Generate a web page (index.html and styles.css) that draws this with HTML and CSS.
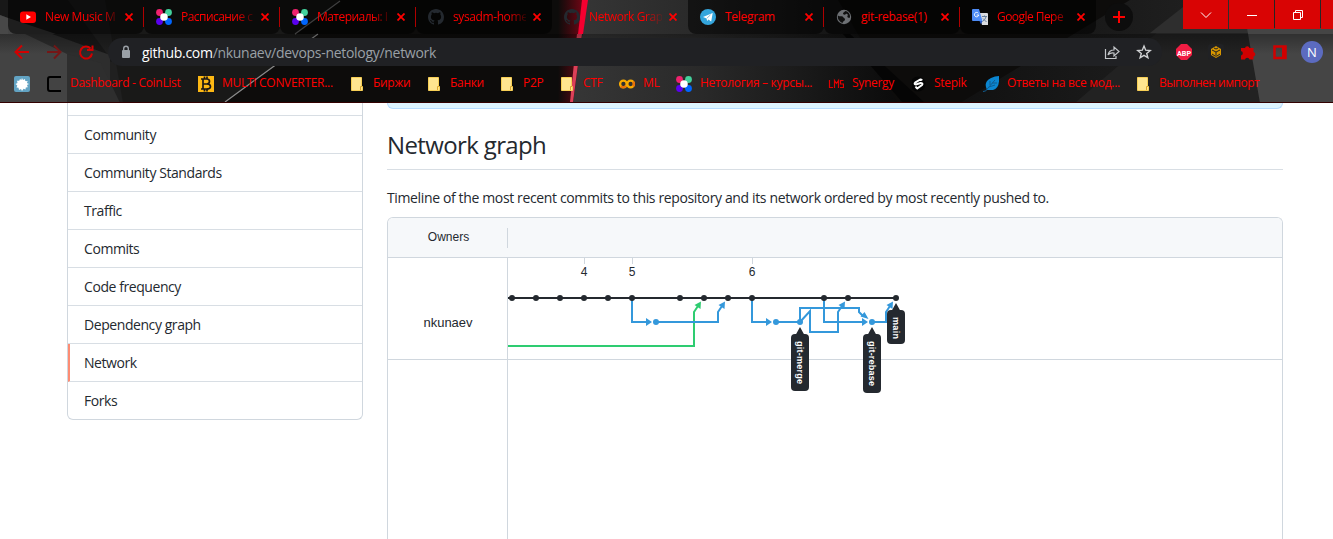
FILE: index.html
```html
<!DOCTYPE html>
<html lang="en">
<head>
<meta charset="utf-8">
<title>Network Graph</title>
<link rel="stylesheet" href="styles.css">
</head>
<body>
<svg class="defs" width="0" height="0">
  <symbol id="netology" viewBox="0 0 16 16"><circle cx="3.5" cy="3.5" r="3.4" fill="#f0226e"/><circle cx="12.5" cy="3.5" r="3.4" fill="#43d19c"/><circle cx="3.5" cy="12.5" r="3.4" fill="#5a00f0"/><circle cx="12.5" cy="12.5" r="3.4" fill="#0066ff"/><circle cx="8" cy="8" r="3.8" fill="#fff"/></symbol>
  <symbol id="github" viewBox="0 0 16 16"><path fill="#24292f" d="M8 0C3.58 0 0 3.58 0 8c0 3.54 2.29 6.53 5.47 7.59.4.07.55-.17.55-.38 0-.19-.01-.82-.01-1.49-2.01.37-2.53-.49-2.69-.94-.09-.23-.48-.94-.82-1.13-.28-.15-.68-.52-.01-.53.63-.01 1.08.58 1.23.82.72 1.21 1.87.87 2.33.66.07-.52.28-.87.51-1.07-1.78-.2-3.64-.89-3.64-3.95 0-.87.31-1.59.82-2.15-.08-.2-.36-1.02.08-2.12 0 0 .67-.21 2.2.82a7.6 7.6 0 0 1 4 0c1.53-1.04 2.2-.82 2.2-.82.44 1.1.16 1.92.08 2.12.51.56.82 1.27.82 2.15 0 3.07-1.87 3.75-3.65 3.95.29.25.54.73.54 1.48 0 1.07-.01 1.93-.01 2.2 0 .21.15.46.55.38A8.01 8.01 0 0 0 16 8c0-4.42-3.58-8-8-8z"/></symbol>
  <symbol id="close" viewBox="0 0 8 8"><path d="M.5.5l7 7M7.500.5l-7 7" stroke="#f00" stroke-width="1.800" fill="none"/></symbol>
  <symbol id="folder" viewBox="0 0 16 16"><path d="M.5 1.500h10v9h1v4H.5z" fill="#ffe58f" stroke="#f7cf55"/><path d="M9.500 14v-3.500H11" stroke="#dca72c" fill="none"/></symbol>
</svg>

<header class="browser">
  <svg class="theme" viewBox="0 0 1333 103" width="1333" height="103">
    <defs>
      <linearGradient id="glow"><stop offset="0" stop-color="#c00018" stop-opacity="0"/><stop offset="1" stop-color="#d60020" stop-opacity=".5"/></linearGradient>
      <linearGradient id="fade"><stop offset="0" stop-color="#363636"/><stop offset=".4" stop-color="#292929"/><stop offset="1" stop-color="#0b0b0b"/></linearGradient>
      <linearGradient id="right"><stop offset="0" stop-color="#111"/><stop offset="1" stop-color="#282828"/></linearGradient>
      <linearGradient id="down" x1="0" y1="0" x2="0" y2="1"><stop offset="0" stop-color="#000" stop-opacity=".3"/><stop offset="1" stop-color="#000" stop-opacity="0"/></linearGradient>
    </defs>
    <rect width="1333" height="103" fill="#0d0c0b"/>
    <path d="M0 0h340l-45 34h23L225 103H0z" fill="#191918"/>
    <path d="M0 0h105l18 103H0z" fill="#202020"/>
    <path d="M8 0h60l45 62L67 53 0 32V0z" fill="#181818"/>
    <path d="M0 15l110 40v48H0z" fill="#2d2d2d"/>
    <path d="M0 15l8 3v16H0z" fill="#484848"/>
    <path d="M8 18l48 16H8z" fill="#444"/>
    <path d="M0 34l25 0 42 20 1 49H0z" fill="#434343"/>
    <path d="M67 54l34 9 19 40H67z" fill="#2e2e2e"/>
    <path d="M340 1l-45 33M318 34l-93 68" stroke="#8b8b8b" stroke-width="1.200"/>
    <path d="M558 0h25l-8 103h-17z" fill="url(#glow)"/>
    <path d="M587 0h251l60 103H573z" fill="url(#fade)"/>
    <path d="M850 34l75 69h-22l-60-69z" fill="#050505"/>
    <path d="M1130 0h203v103H960z" fill="url(#right)"/>
    <path d="M1195 0h53l12 103h-185z" fill="#222"/>
    <path d="M1192 0h56v33h-98z" fill="#2e2e2e"/>
    <path d="M1247 28h86v75h-73z" fill="#454545"/>
    <path d="M582 0h6l-5 34h-5z" fill="#f50030"/>
    <path d="M577 34h5l-9 68h-3z" fill="#dc4058"/>
    <rect y="34" width="1333" height="20" fill="url(#down)"/>
  </svg>

  <nav class="tabs">
    <div class="tab"><svg class="fav" viewBox="0 0 16 16"><rect y="2.500" width="16" height="11.500" rx="3" fill="#f00"/><path d="M6.300 5.300v5.400L11 8z" fill="#fff"/></svg><span class="title">New Music M</span><svg class="x"><use href="#close"/></svg></div>
    <div class="tab"><svg class="fav"><use href="#netology"/></svg><span class="title cyr">Расписание с</span><svg class="x"><use href="#close"/></svg></div>
    <div class="tab"><svg class="fav"><use href="#netology"/></svg><span class="title cyr">Материалы: I</span><svg class="x"><use href="#close"/></svg></div>
    <div class="tab plain"><svg class="fav"><use href="#github"/></svg><span class="title">sysadm-hom<i>e</i></span><svg class="x"><use href="#close"/></svg></div>
    <div class="tab active"><svg class="fav"><use href="#github"/></svg><span class="title">Network Grap</span><svg class="x"><use href="#close"/></svg></div>
    <div class="tab"><svg class="fav" viewBox="0 0 16 16"><circle cx="8" cy="8" r="8" fill="#34a5dc"/><path d="M3 8l9.700-4-1.500 8.600-2.700-2-1.400 1.300-.5-2.500z" fill="#fff"/><path d="M6.800 9.300l3.700-3.500" stroke="#86bddc"/></svg><span class="title full">Telegram</span><svg class="x"><use href="#close"/></svg></div>
    <div class="tab"><svg class="fav" viewBox="0 0 16 16"><circle cx="8" cy="8" r="7.200" fill="#6d7074"/><path d="M2 6.500c2 1.500 4 0 5 1.500s2 1 2 2.500-2 1.500-2.500 3.500C4 13 1 10 2 6.500zM9 2c0 1.500-2 1-2 2.500S9 6 10 5s2.500 1 1.500 2S13 9.500 14 8.500C14.500 5 12 2 9 2z" fill="#101010"/></svg><span class="title full">git-rebase(1)</span><svg class="x"><use href="#close"/></svg></div>
    <div class="tab plain"><svg class="fav" viewBox="0 0 16 16"><path d="M7 4h8q1 0 1 1v11H10z" fill="#dadce0"/><path d="M1 0h6l3.500 12H1q-1 0-1-1V1q0-1 1-1z" fill="#4d8bf5"/><path d="M7.500 12h3L9 15.500z" fill="#2458c7"/><path d="M6.300 4.200A2.200 2.200 0 1 0 6.800 6H4.700" stroke="#fff" fill="none"/><path d="M10 7.500h5M12.500 6.500v1M14 8q-1 3-3.500 4.500M11 9.500l3.500 3.500" stroke="#66809c" fill="none"/></svg><span class="title cyr">Google Пере</span><svg class="x"><use href="#close"/></svg></div>
    <div class="newtab"><svg width="12" height="12"><path d="M6 0v12M0 6h12" stroke="#f00" stroke-width="2"/></svg></div>
    <div class="window">
      <span><svg width="12" height="12"><path d="M1 3.500l5 5 5-5" stroke="#fff" fill="none"/></svg></span>
      <span><svg width="12" height="12"><path d="M1 6.500h10" stroke="#fff"/></svg></span>
      <span><svg width="12" height="12"><path d="M1.500 3.500h7v7h-7zM3.500 3.500v-2h7v7h-2" stroke="#fff" fill="none"/></svg></span>
      <span></span>
    </div>
  </nav>

  <div class="toolbar">
    <svg class="navicons" width="108" height="28" viewBox="0 0 108 28" fill="none" stroke="#d20000" stroke-width="2"><path d="M29 14H16.500M22 7.500L15.500 14l6.500 6.500"/><path d="M47 14h12.500M54 7.500l6.500 6.500-6.500 6.500" stroke="#751616"/><path d="M90.500 10.500A6 6 0 1 0 92 15.500M92.500 7.500v4.500H87"/></svg>
    <div class="omnibox">
      <svg width="10" height="14" viewBox="0 0 10 14"><rect x="1" y="5" width="8" height="8" rx="1" fill="#9aa0a6"/><path d="M2.700 5.500V3.500a2.300 2.300 0 0 1 4.600 0v2" stroke="#9aa0a6" stroke-width="1.400" fill="none"/></svg>
      <span class="url"><b>github.com</b>/nkunaev/devops-netology/network</span>
      <svg class="share" width="16" height="16" viewBox="0 0 16 16" fill="none" stroke="#c4c7ca" stroke-width="1.200"><path d="M1.500 5v9.500H12V12"/><path d="M4 11q1-5 6-5V3l5 4.500L10 12V9q-4-.5-6 2z"/></svg>
      <svg width="16" height="16" viewBox="0 0 16 16"><path d="M8 2l1.700 4.200 4.500.3-3.500 2.900 1.200 4.400L8 11.400l-3.900 2.400 1.200-4.400L1.800 6.500l4.500-.3z" fill="none" stroke="#d0d2d4" stroke-width="1.400"/></svg>
    </div>
    <svg class="exts" width="171" height="28" viewBox="1162 38 171 28">
      <path d="M1181 44h6l5 5v6l-5 5h-6l-5-5v-6z" fill="#f01d43"/><text x="1184" y="55.500" class="abp" textLength="14" lengthAdjust="spacingAndGlyphs">ABP</text>
      <rect x="1208" y="44" width="16" height="16" rx="3" fill="#202124"/><path d="M1216 46l5 3v6l-5 3-5-3v-6z" fill="#d69500"/><path d="M1212 50l4 2 4-2M1216 52v5M1212 54l3 2M1220 54l-3 2M1214 48l2 1 2-1" stroke="#202124" fill="none"/>
      <path d="M1241 48h4a2.300 2.300 0 0 1 4.500 0h4v4a2.300 2.300 0 0 1 0 4.500v3h-4a2.300 2.300 0 0 0-4.500 0h-4v-4a2.300 2.300 0 0 0 0-4.500z" fill="#d00000"/>
      <path d="M1274.500 46.500h11v11.500h-11z" fill="none" stroke="#d00000" stroke-width="2.500"/><path d="M1282 46h4v13h-4z" fill="#d00000"/>
      <circle cx="1312" cy="52" r="11" fill="#5c6bc0"/><text x="1312" y="56.500" class="avatar">N</text>
    </svg>
  </div>

  <nav class="bookmarks">
    <a><svg class="fav" viewBox="0 0 16 16"><rect width="16" height="16" rx="2" fill="#62a3c3"/><path d="M8 2l1 2 2-1 .3 2 2.500.2-1 1.800L15 8l-2 1 .8 2.200-2 .3-.3 2-2-.8L8 15l-1-2-2 1-.5-2.300-2-.2.8-2L1.500 8l2-1L3 4.800l2.200 0L6 3l1.300 1z" fill="#fff"/></svg></a>
    <a class="mid"><svg class="fav" viewBox="0 0 16 16"><path d="M15 1H4Q2 1 2 3v10q0 2 2 2h11" fill="none" stroke="#000" stroke-width="2"/></svg><span>Dashboard - CoinList</span></a>
    <a class="mid"><svg class="fav" viewBox="0 0 16 16"><rect width="16" height="16" fill="#fdb813"/><path d="M3 3h5.500q3 0 3 2.300T9 8Q12.500 8 12.500 10.500T8.500 13H3M5 3v10M5 8h4M6.500.5V3M9 .5V3M6.500 13v2.500M9 13v2.500" fill="none" stroke="#1a1717" stroke-width="1.700"/></svg><span>MULTI CONVERTER...</span></a>
    <a><svg class="fav"><use href="#folder"/></svg><span>Биржи</span></a>
    <a><svg class="fav"><use href="#folder"/></svg><span>Банки</span></a>
    <a><svg class="fav"><use href="#folder"/></svg><span>P2P</span></a>
    <a><svg class="fav"><use href="#folder"/></svg><span>CTF</span></a>
    <a class="mid"><svg class="fav" viewBox="0 0 16 16" fill="none" stroke-width="2.300"><circle cx="4.400" cy="8" r="3.300" stroke="#f9ab00"/><circle cx="11.600" cy="8" r="3.300" stroke="#f9ab00"/><path d="M7 9.800A3.300 3.300 0 0 1 2 10.300M14 5.700a3.300 3.300 0 0 1 0 4.600" stroke="#e8710a"/></svg><span>ML</span></a>
    <a class="mid"><svg class="fav"><use href="#netology"/></svg><span>Нетология – курсы...</span></a>
    <a class="mid"><svg class="fav" viewBox="0 0 16 16" fill="none" stroke="#e00000" stroke-width="1.200"><path d="M1.500 4v7.500H5M6.500 12V4.500l2 3 2-3V12M15.500 4.500h-3V8h3v3.500h-3.500"/></svg><span>Synergy</span></a>
    <a><svg class="fav" viewBox="0 0 16 16"><circle cx="6" cy="8" r="7.500" fill="#050505"/><path d="M9 3L3.500 6.300Q1.500 8 4 8.500L8.500 7q3 0 1.500 2L4.500 13M3.500 10.500L5 12.500M9 3l1 1.500" fill="none" stroke="#fff" stroke-width="2"/></svg><span>Stepik</span></a>
    <a class="mid"><svg class="fav" viewBox="0 0 16 16"><path d="M16 0q1 12-6 14H4Q0 6 8 2q4-2 8-2z" fill="#0b86d1"/><path d="M0 15.500q3 .5 5-3.500L12 4M6 11l6-2M7 9V5M9 7h5" fill="none" stroke="#105d91"/></svg><span>Ответы на все мод...</span></a>
    <a><svg class="fav"><use href="#folder"/></svg><span class="tight">Выполнен импорт</span></a>
  </nav>
</header>

<main class="page">
  <aside class="menu">
    <a class="cut"></a><a>Community</a><a>Community Standards</a><a>Traffic</a><a>Commits</a><a>Code frequency</a><a>Dependency graph</a><a class="selected">Network</a><a>Forks</a>
  </aside>
  <section class="content">
    <div class="flash"></div>
    <h2><span>Network graph</span></h2>
    <p><span>Timeline of the most recent commits to this repository and its network ordered by most recently pushed to.</span></p>
    <div class="network">
      <div class="head"><div>Owners</div></div>
      <div class="body">
        <div class="owners"><div>nkunaev</div></div>
        <svg class="graph" width="774" height="281" viewBox="508 258 774 281">
          <path d="M508 359.500h774" stroke="#d0d7de"/>
          <path d="M584.500 258v6M632.500 258v6M752.500 258v6" stroke="#d0d7de"/>
          <g class="days"><text x="584" y="276">4</text><text x="632" y="276">5</text><text x="752" y="276">6</text></g>
          <g fill="none" stroke-width="2">
            <path d="M508 298h388" stroke="#24292f"/>
            <path d="M508 346h186v-34l4-6" stroke="#2ecc71"/>
            <path d="M632 298v24h14M656 322h62v-10l4-6M752 298v24h14M776 322h24M800 322v-14h59v4l4 4M800 322l10-11v21h28v-20l4-6M824 298v24h38M872 322h14v-10l4-6" stroke="#3498db"/>
          </g>
          <path d="M701 301.500l-.5 7.500-6-4z" fill="#2ecc71"/>
          <path d="M652 322l-6-4v8zM772 322l-6-4v8zM868 322l-6-4v8zM725 301.500l-.5 7.500-6-4zM845 301.500l-.5 7.500-6-4zM893 301.500l-.5 7.500-6-4zM868.500 319l-8-2.500 4-4.500z" fill="#3498db"/>
          <g fill="#24292f"><circle cx="512" cy="298" r="3"/><circle cx="536" cy="298" r="3"/><circle cx="560" cy="298" r="3"/><circle cx="584" cy="298" r="3"/><circle cx="608" cy="298" r="3"/><circle cx="632" cy="298" r="3"/><circle cx="680" cy="298" r="3"/><circle cx="704" cy="298" r="3"/><circle cx="728" cy="298" r="3"/><circle cx="752" cy="298" r="3"/><circle cx="824" cy="298" r="3"/><circle cx="848" cy="298" r="3"/><circle cx="896" cy="298" r="3"/></g>
          <g fill="#3498db"><circle cx="656" cy="322" r="3"/><circle cx="776" cy="322" r="3"/><circle cx="800" cy="322" r="3"/><circle cx="872" cy="322" r="3"/></g>
          <g fill="#24292f"><path d="M896 303l5 9h-10zM800 327l5 9h-10zM872 327l5 9h-10z"/><rect x="887" y="310" width="18" height="34" rx="4"/><rect x="791" y="334" width="18" height="57" rx="4"/><rect x="863" y="334" width="18" height="59" rx="4"/></g>
          <g class="refs"><text transform="translate(893 317) rotate(90)" textLength="22">main</text><text transform="translate(797 341) rotate(90)" textLength="43">git-merge</text><text transform="translate(869 341) rotate(90)" textLength="45">git-rebase</text></g>
        </svg>
      </div>
    </div>
  </section>
</main>
</body>
</html>
```

FILE: styles.css
```css
* { box-sizing: border-box; }
html, body { margin: 0; height: 539px; overflow: hidden; }
body { display: flex; flex-direction: column; background: #fff; color: #24292f; font-family: "Open Sans", "Noto Sans", sans-serif; font-size: 14px; }
svg { display: block; flex: none; }
.defs { position: absolute; }

.browser { position: relative; height: 103px; flex: none; border-bottom: 1px solid #300; overflow: hidden; }
.theme { position: absolute; left: 0; top: 0; }
.tabs { position: relative; display: flex; height: 34px; padding-left: 8px; font-size: 12px; color: #f00; }
.tab { display: flex; align-items: center; width: 136px; height: 34px; padding-left: 12px; background: rgba(0, 0, 0, .55); border-radius: 0 0 8px 8px; flex: none; }
.tab:not(.plain):not(.active)::after { content: ""; width: 1px; height: 20px; margin-left: 10px; background: #b00000; }
.tab.active { background: none; }
.fav { width: 16px; height: 16px; }
.title { width: 73px; flex: none; margin: 0 7px 0 9px; white-space: nowrap; letter-spacing: -.4px; line-height: 16px; -webkit-mask-image: linear-gradient(90deg, #000 75%, rgba(0, 0, 0, .15) 100%); }
.title.cyr { letter-spacing: -.55px; }
.title.full { -webkit-mask-image: none; letter-spacing: -.3px; }
.title i { font-style: normal; }
.x { width: 8px; height: 8px; }
.newtab { display: flex; align-items: center; justify-content: center; width: 28px; height: 28px; margin: 3px 50px 0 9px; border-radius: 50%; background: #0d0d0d; }
.window { display: flex; gap: 1px; width: 150px; height: 29px; overflow: hidden; }
.window span { display: flex; align-items: center; justify-content: center; width: 45px; flex: none; background: #d90404; }

.toolbar { position: relative; display: flex; height: 36px; padding-top: 4px; }
.omnibox { display: flex; align-items: center; width: 1054px; height: 28px; padding: 0 10px 0 13px; border-radius: 14px; background: #202124; }
.url { flex: 1; margin-left: 11px; color: #9aa0a6; font-size: 14px; letter-spacing: -.3px; white-space: nowrap; }
.url b { color: #fff; font-weight: 400; }
.share { margin-right: 16px; }
.abp { font: 700 8px Roboto, sans-serif; fill: #fff; text-anchor: middle; }
.avatar { font: 13px "Open Sans", sans-serif; fill: #fff; text-anchor: middle; }

.bookmarks { position: relative; display: grid; grid-template-columns: 32px 152px 153px 77px 73px 60px 58px 57px 152px 84px 71px 154px 180px; padding: 6px 0 0 14px; color: #f00; font-size: 12px; letter-spacing: -.3px; white-space: nowrap; }
.bookmarks a { display: flex; align-items: center; gap: 6px; height: 16px; }
.bookmarks a span { line-height: 16px; padding-bottom: 2px; }
.bookmarks a.mid { gap: 8px; }
.bookmarks .tight { letter-spacing: -.5px; }

.page { display: flex; gap: 24px; flex: 1; padding: 0 50px 0 67px; min-height: 0; }
.menu { width: 296px; height: 317px; border: solid #d0d7de; border-width: 0 1px 1px; border-radius: 0 0 6px 6px; }
.menu a { display: flex; align-items: center; height: 38px; padding-left: 16px; border-bottom: 1px solid #d8dee4; letter-spacing: -.43px; }
.menu a.cut { height: 13px; }
.menu a:last-child { height: 37px; border-bottom: 0; }
.menu .selected { border-left: 2px solid #fd8c73; padding-left: 14px; }
.content { display: flex; flex-direction: column; width: 896px; }
.flash { height: 6px; flex: none; border: solid #b6dcff; border-width: 0 1px 1px; border-radius: 0 0 6px 6px; background: #ddf4ff; }
h2 { margin: 0; height: 61px; flex: none; padding-top: 18px; border-bottom: 1px solid #d8dee4; font-size: 24px; line-height: 36px; font-weight: 400; letter-spacing: -.63px; }
p { margin: 0; height: 47px; flex: none; padding-top: 17px; line-height: 21px; white-space: nowrap; letter-spacing: -.365px; }
.network { display: flex; flex-direction: column; flex: 1; border: solid #d0d7de; border-width: 1px 1px 0; border-radius: 6px 6px 0 0; overflow: hidden; font-family: "Liberation Sans", Arial, sans-serif; }
.head { display: flex; align-items: center; height: 40px; flex: none; background: #f6f8fa; border-bottom: 1px solid #d0d7de; font-size: 12px; }
.head div { display: flex; align-items: center; justify-content: center; width: 120px; height: 20px; padding: 0 0 2px 2px; border-right: 1px solid #d0d7de; }
.body { display: flex; flex: 1; }
.owners { width: 120px; border-right: 1px solid #d0d7de; font-size: 13px; }
.owners div { height: 102px; padding: 57px 0 0 1px; border-bottom: 1px solid #d0d7de; text-align: center; }
.days { font-size: 12px; text-anchor: middle; fill: #24292f; }
.refs { font: 700 9px "Liberation Sans", sans-serif; fill: #fff; }
```
